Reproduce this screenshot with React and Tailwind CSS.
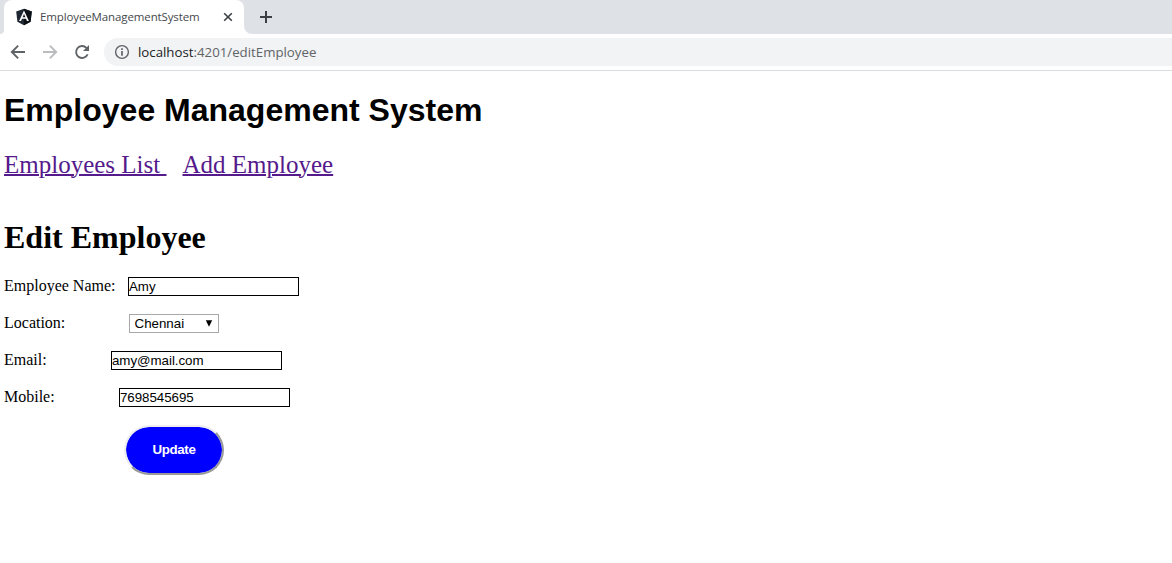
import React from "react";

const fieldClass =
  "block h-[19px] w-[171px] border border-black bg-white p-0 font-['Liberation_Sans',Arial,sans-serif] text-[13.33px] leading-[17px] tracking-[-0.04px] text-black outline-none";

function AngularIcon() {
  return (
    <svg width="16" height="18" viewBox="0 0 16 18" className="block">
      <path d="M8 .7 15.8 3.4 14.6 13.7 8 17.2 1.4 13.7.2 3.4Z" fill="#1f2733" />
      <path d="M8 .7 15.8 3.4 14.6 13.7 8 17.2Z" fill="#0c1118" />
      <path d="M8 2.4 3.1 13.1h1.9l1-2.4h4l1 2.4h1.9Zm0 3.7 1.4 3.1H6.6Z" fill="#fff" fillRule="evenodd" />
    </svg>
  );
}

function BrowserBar() {
  return (
    <header className="font-['Open_Sans','Noto_Sans',sans-serif]">
      <div className="flex h-[34px] bg-[#dee1e6]">
        <div className="flex w-1 items-end bg-white">
          <div className="h-[34px] w-1 rounded-br-[5px] bg-[#dee1e6]" />
        </div>
        <div className="bg-[#dee1e6]">
          <div className="flex h-[34px] w-[240px] items-center rounded-t-lg bg-white pl-3">
            <AngularIcon />
            <span className="ml-2 w-[183px] whitespace-nowrap text-[11.5px] leading-4 tracking-[-0.12px] text-[#45484c]">
              EmployeeManagementSystem
            </span>
            <svg width="10" height="10" viewBox="0 0 10 10" className="block">
              <path d="m1.2 1.2 7.6 7.6m0-7.6L1.2 8.8" stroke="#3c4043" strokeWidth="1.6" />
            </svg>
          </div>
        </div>
        <div className="bg-white">
          <div className="flex h-[34px] w-12 items-center rounded-bl-lg bg-[#dee1e6] pl-4">
            <svg width="12" height="12" viewBox="0 0 12 12" className="block">
              <path d="M6 0v12M0 6h12" stroke="#3c4043" strokeWidth="2" />
            </svg>
          </div>
        </div>
      </div>
      <div className="flex h-[37px] items-center border-b border-[#dadce0] bg-white pl-[10px]">
        <svg width="16" height="16" viewBox="0 0 16 16" className="block">
          <path d="M15 8H2M8.2 1.6 1.8 8l6.4 6.4" fill="none" stroke="#5f6368" strokeWidth="1.9" />
        </svg>
        <svg width="16" height="16" viewBox="0 0 16 16" className="ml-4 block">
          <path d="M1 8h13M7.8 1.6 14.2 8l-6.4 6.4" fill="none" stroke="#babcbe" strokeWidth="1.9" />
        </svg>
        <svg width="16" height="16" viewBox="0 0 16 16" className="ml-4 block">
          <path d="M13.6 10.4A6 6 0 1 1 12.4 3.8L14 5.4" fill="none" stroke="#5f6368" strokeWidth="1.9" />
          <path d="M15 1v6H9Z" fill="#5f6368" />
        </svg>
        <div className="ml-[14px] flex h-7 flex-1 items-center rounded-l-full bg-[#f1f3f4] pl-[10px]">
          <svg width="16" height="16" viewBox="0 0 16 16" className="block">
            <circle cx="8" cy="8" r="6.4" fill="none" stroke="#5f6368" strokeWidth="1.4" />
            <path d="M8 4.2v1.7M8 7v4.8" stroke="#5f6368" strokeWidth="1.7" />
          </svg>
          <span className="ml-2 whitespace-nowrap text-[13.25px] leading-5 text-[#5f6368]">
            <span className="text-[#202124]">localhost</span>:4201/editEmployee
          </span>
        </div>
      </div>
    </header>
  );
}

export default function App() {
  return (
    <div className="h-[563px] w-full overflow-hidden bg-white text-black">
      <BrowserBar />
      <main className="pl-1 font-['Liberation_Serif','Times_New_Roman',serif]">
        <h1 className="mt-[21px] whitespace-nowrap font-['Liberation_Sans',Arial,sans-serif] text-[32px] leading-9 font-bold">
          Employee Management System
        </h1>
        <nav className="mt-[22px] flex text-[25px] leading-[30px] whitespace-pre text-[#551a8b]">
          <a href="#list" className="w-[178.5px]">
            <span className="underline decoration-2">{"Employees List "}</span>
          </a>
          <a href="#add" className="underline decoration-2">Add Employee</a>
        </nav>
        <h2 className="mt-[39px] text-[32px] leading-9 font-bold whitespace-nowrap">Edit Employee</h2>
        <form className="mt-[22px] flex flex-col gap-[18px] text-[16px] leading-[17px]">
          <div className="flex h-[19px]">
            <label htmlFor="name" className="w-[124px]">Employee Name:</label>
            <input id="name" className={fieldClass} defaultValue="Amy" />
          </div>
          <div className="flex h-[19px]">
            <span className="w-[125px]">Location:</span>
            <button type="button" className="flex h-[19px] w-[90px] items-center justify-between border border-[#a9a9a9] bg-white pr-[5px] pl-[4.5px] font-['Liberation_Sans',Arial,sans-serif] text-[13.33px] leading-[17px]">
              <span>Chennai</span>
              <svg width="8" height="7" viewBox="0 0 8 7" className="block">
                <path d="M.8.3h6.4L4 6.7Z" fill="#000" />
              </svg>
            </button>
          </div>
          <div className="flex h-[19px]">
            <label htmlFor="email" className="w-[107px]">Email:</label>
            <input id="email" className={fieldClass} defaultValue="amy@mail.com" />
          </div>
          <div className="flex h-[19px]">
            <label htmlFor="mobile" className="w-[115px]">Mobile:</label>
            <input id="mobile" className={fieldClass} defaultValue="7698545695" />
          </div>
          <button type="button" className="ml-[120px] h-[50px] w-[100px] rounded-[25px] border-2 border-t-[#eeeeee] border-r-[#999999] border-b-[#999999] border-l-[#eeeeee] bg-[#0000ff] bg-clip-padding pb-[2px] font-['Liberation_Sans',Arial,sans-serif] text-[13.33px] font-bold tracking-[-0.35px] text-white">
            Update
          </button>
        </form>
      </main>
    </div>
  );
}
